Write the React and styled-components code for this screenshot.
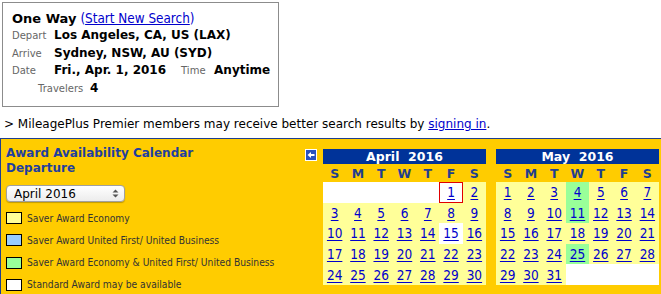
import styled, { createGlobalStyle, css } from "styled-components";

const GlobalStyle = createGlobalStyle`
  body {
    margin: 0;
    background: #fff;
    font-family: "DejaVu Sans", Verdana, sans-serif;
    color: #000;
  }
`;

const Page = styled.div`
  width: 661px;
  height: 294px;
  overflow: hidden;
  padding-top: 2px;
`;

const SearchBox = styled.div`
  margin-left: 2px;
  width: 258px;
  height: 87px;
  border: 1px solid #8c8c8c;
  padding: 8px 8px 8px 9px;
  display: flex;
  flex-direction: column;
`;

const Line = styled.div`
  display: flex;
  align-items: baseline;
  white-space: nowrap;
  height: 18.4px;
  padding-left: ${(p) => p.indent || 0}px;
`;

const Title = styled.span`
  font-size: 13px;
  font-weight: bold;
  margin-right: 4px;
`;

const Link = styled.a`
  color: #0000cc;
  text-decoration: underline;
  cursor: pointer;
`;

const Paren = styled.span`
  font-family: "DejaVu Sans Condensed", "DejaVu Sans", sans-serif;
  font-size: 13.4px;
  color: #0000cc;
`;

const Label = styled.span`
  font-size: 10px;
  color: #666;
  width: ${(p) => p.w || 42}px;
  flex-shrink: 0;
`;

const Value = styled.span`
  font-size: 12px;
  font-weight: bold;
  margin-right: ${(p) => p.gap || 0}px;
`;

const Notice = styled.p`
  margin: 0;
  padding: 10px 0 0 4px;
  height: 20px;
  font-size: 12px;
  white-space: nowrap;
`;

const Panel = styled.div`
  margin-top: 1px;
  background: #ffcc00;
  border-top: 1px solid #1f3f8f;
  border-left: 1px solid #1f3f8f;
  height: 160px;
  display: flex;
  align-items: flex-start;
`;

const Side = styled.div`
  width: 297px;
  padding: 7px 0 0 5px;
  flex-shrink: 0;
`;

const Heading = styled.h2`
  margin: 0;
  font-size: 12px;
  line-height: 15px;
  color: #1f3f9f;
  font-weight: bold;
`;

const SelectWrap = styled.div`
  position: relative;
  margin-top: 9px;
  width: 119px;
  height: 17px;
`;

const Select = styled.select`
  appearance: none;
  display: block;
  width: 119px;
  height: 17px;
  border: 1px solid #a0a0a0;
  border-radius: 4px;
  background: linear-gradient(#ffffff, #ececec);
  font-family: "DejaVu Sans", sans-serif;
  font-size: 12px;
  padding: 0 0 0 7px;
  color: #000;
  box-shadow: 0 1px 1px rgba(0, 0, 0, 0.25);
`;

const Arrows = styled.svg`
  position: absolute;
  right: 6px;
  top: 4px;
  pointer-events: none;
`;

const Legend = styled.ul`
  list-style: none;
  margin: 10px 0 0;
  padding: 0;
  display: flex;
  flex-direction: column;
  gap: 10.3px;
`;

const LegendItem = styled.li`
  display: flex;
  align-items: center;
  gap: 5px;
  height: 12px;
  font-family: "DejaVu Sans Condensed", "DejaVu Sans", sans-serif;
  font-size: 10.2px;
  color: #333;
  white-space: nowrap;
`;

const Swatch = styled.span`
  width: 14px;
  height: 10px;
  border: 1px solid #000;
  background: ${(p) => p.color};
`;

const BackIcon = styled.svg`
  margin: 10px 6px 0 2px;
  flex-shrink: 0;
`;

const Month = styled.div`
  width: 163px;
  margin-top: 10px;
  margin-right: ${(p) => p.gap || 0}px;
  flex-shrink: 0;
`;

const MonthBar = styled.div`
  height: 15px;
  background: #003399;
  color: #fff;
  font-weight: bold;
  font-size: 12.5px;
  line-height: 15px;
  text-align: center;
  white-space: pre;
`;

const Week = styled.div`
  display: grid;
  grid-template-columns: repeat(7, 1fr);
  height: 18px;
  align-items: center;
`;

const DayName = styled.span`
  text-align: center;
  font-weight: bold;
  font-size: 12.5px;
  color: #1f3f8f;
`;

const Days = styled.div`
  display: grid;
  grid-template-columns: repeat(7, 1fr);
  grid-template-rows: repeat(5, 20.6px);
  background: #ffff99;
`;

const Day = styled.div`
  display: flex;
  align-items: center;
  justify-content: center;
  font-family: "DejaVu Sans Condensed", "DejaVu Sans", sans-serif;
  font-size: 13.5px;
  background: ${(p) =>
    p.kind === "blank" || p.kind === "white"
      ? "#fff"
      : p.kind === "green"
      ? "#99ff99"
      : "transparent"};
  ${(p) =>
    p.today &&
    css`
      outline: 1px solid #e00000;
      outline-offset: -1px;
      background: #fff;
    `}
`;

const DayLink = styled.a`
  color: #0000cc;
  text-decoration: underline;
  text-underline-offset: 2px;
  cursor: pointer;
`;

const legend = [
  { color: "#ffff99", text: "Saver Award Economy" },
  { color: "#99ccff", text: "Saver Award United First/ United Business" },
  { color: "#99ff99", text: "Saver Award Economy & United First/ United Business" },
  { color: "#ffffff", text: "Standard Award may be available" },
];

function Calendar({ title, offset, days, colors = {}, today, gap }) {
  const cells = [];
  for (let i = 0; i < offset; i++) cells.push(null);
  for (let d = 1; d <= days; d++) cells.push(d);
  while (cells.length < 35) cells.push(null);

  return (
    <Month gap={gap}>
      <MonthBar>{title}</MonthBar>
      <Week>
        {["S", "M", "T", "W", "T", "F", "S"].map((n, i) => (
          <DayName key={i}>{n}</DayName>
        ))}
      </Week>
      <Days>
        {cells.map((d, i) =>
          d ? (
            <Day key={i} kind={colors[d]} today={d === today}>
              <DayLink>{d}</DayLink>
            </Day>
          ) : (
            <Day key={i} kind="blank" />
          )
        )}
      </Days>
    </Month>
  );
}

export default function App() {
  return (
    <Page>
      <GlobalStyle />
      <SearchBox>
        <Line>
          <Title>One Way</Title>
          <Paren>
            (<Link>Start New Search</Link>)
          </Paren>
        </Line>
        <Line>
          <Label>Depart</Label>
          <Value>Los Angeles, CA, US (LAX)</Value>
        </Line>
        <Line>
          <Label>Arrive</Label>
          <Value>Sydney, NSW, AU (SYD)</Value>
        </Line>
        <Line>
          <Label>Date</Label>
          <Value gap={15}>Fri., Apr. 1, 2016</Value>
          <Label w={33}>Time</Label>
          <Value>Anytime</Value>
        </Line>
        <Line indent={26}>
          <Label w={52}>Travelers</Label>
          <Value>4</Value>
        </Line>
      </SearchBox>

      <Notice>
        &gt; MileagePlus Premier members may receive better search results by{" "}
        <Link>signing in</Link>.
      </Notice>

      <Panel>
        <Side>
          <Heading>
            Award Availability Calendar
            <br />
            Departure
          </Heading>
          <SelectWrap>
            <Select defaultValue="2016-04">
              <option value="2016-04">April 2016</option>
              <option value="2016-05">May 2016</option>
            </Select>
            <Arrows width="7" height="9" viewBox="0 0 7 9">
              <path d="M0.5 3.5 L3.5 0.5 L6.5 3.5 Z M0.5 5.5 L3.5 8.5 L6.5 5.5 Z" fill="#555" />
            </Arrows>
          </SelectWrap>
          <Legend>
            {legend.map((l) => (
              <LegendItem key={l.text}>
                <Swatch color={l.color} />
                {l.text}
              </LegendItem>
            ))}
          </Legend>
        </Side>

        <BackIcon width="12" height="12" viewBox="0 0 12 12">
          <rect x="0.5" y="0.5" width="11" height="11" fill="#2a52be" stroke="#fff" />
          <path d="M2.5 6 L6 3 L6 9 Z" fill="#fff" />
          <rect x="6" y="5" width="3.5" height="2" fill="#fff" />
        </BackIcon>

        <Calendar title="April  2016" offset={5} days={30} colors={{ 15: "white" }} today={1} gap={10} />
        <Calendar title="May  2016" offset={0} days={31} colors={{ 4: "green", 11: "green", 25: "green" }} />
      </Panel>
    </Page>
  );
}
